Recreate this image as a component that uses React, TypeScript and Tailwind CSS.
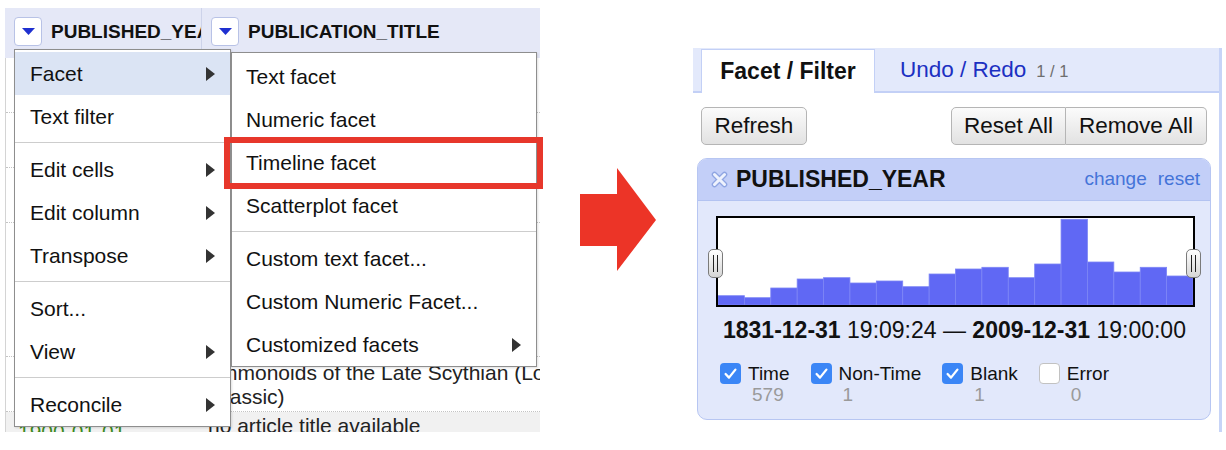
import React from "react";

const bars = [77.7, 79.7, 70, 61, 59.7, 65, 63, 68.7, 56, 51, 49.3, 59.7, 46, 1.3, 44, 54, 49.3, 58];

function RightTri() {
  return (
    <svg width="9" height="14" viewBox="0 0 9 14" className="block shrink-0">
      <path d="M0 0 L9 7 L0 14 Z" fill="#333" />
    </svg>
  );
}

function DropBtn() {
  return (
    <div className="w-[28px] h-[29px] shrink-0 rounded-[4px] border border-[#b8c2e6] bg-white flex items-center justify-center">
      <svg width="13" height="7" viewBox="0 0 13 7" className="block">
        <path d="M0 0 H13 L6.5 7 Z" fill="#1f30d0" />
      </svg>
    </div>
  );
}

function MenuItem({ label, arrow = false, active = false, sub = false }: { label: string; arrow?: boolean; active?: boolean; sub?: boolean }) {
  const cls = sub
    ? "h-[43px] flex items-center pl-[14px] pr-[15px]"
    : active
    ? "h-[43px] flex items-center pl-[15px] pr-[15px] bg-[#dbe4f4]"
    : "h-[43px] flex items-center pl-[15px] pr-[15px]";
  return (
    <div className={cls}>
      <span className="flex-1 whitespace-nowrap">{label}</span>
      {arrow ? <RightTri /> : null}
    </div>
  );
}

function Sep() {
  return (
    <div className="h-[10px] pt-[4px]">
      <div className="h-px bg-[#cdcdcd]" />
    </div>
  );
}

function LeftPart() {
  return (
    <div className="relative ml-[5px] mt-[8px] w-[535px] h-[424px] shrink-0">
      <div className="w-full h-full overflow-hidden flex flex-col">
        <div className="h-[50px] shrink-0 flex bg-[#e5e8f7]">
          <div className="w-[197px] shrink-0 overflow-hidden flex items-start pt-[9px] pl-[9px] gap-[9px] border-r border-[#cdd3ea]">
            <DropBtn />
            <span className="text-[19px] font-bold leading-[29px] whitespace-nowrap">PUBLISHED_YEAR</span>
          </div>
          <div className="flex-1 flex items-start pt-[9px] pl-[9px] gap-[9px]">
            <DropBtn />
            <span className="text-[19px] font-bold leading-[29px] whitespace-nowrap">PUBLICATION_TITLE</span>
          </div>
        </div>
        <div className="flex-1 flex flex-col border-l border-[#d4d4d4] text-[21px] leading-[24px] text-[#222]">
          <div className="h-[55px] shrink-0 border-b border-dotted border-[#c4c4c4]" />
          <div className="h-[55px] shrink-0 border-b border-dotted border-[#c4c4c4]" />
          <div className="h-[55px] shrink-0 border-b border-dotted border-[#c4c4c4]" />
          <div className="h-[134px] shrink-0 border-b border-dotted border-[#c4c4c4]" />
          <div className="h-[55px] shrink-0 flex border-b border-dotted border-[#c4c4c4]">
            <div className="w-[196px] shrink-0" />
            <div className="flex-1 overflow-hidden pl-[4px] pt-[4px] whitespace-nowrap">
              <div>Ammonoids of the Late Scythian (Lower</div>
              <div>Triassic)</div>
            </div>
          </div>
          <div className="flex-1 flex bg-[#f1f1f1]">
            <div className="w-[196px] shrink-0 pl-[12px] pt-[8px] text-[#3b8a1d] whitespace-nowrap">1900-01-01</div>
            <div className="flex-1 overflow-hidden pl-[6px] pt-[2px] whitespace-nowrap">no article title available</div>
          </div>
        </div>
      </div>

      <div className="absolute left-[9px] top-[41px] w-[217px] border border-[#8e8e8e] bg-white pt-[2px] text-[21px] leading-[24px] text-[#111] shadow-[1px_1px_2px_rgba(0,0,0,0.12)]">
        <MenuItem label="Facet" arrow active />
        <MenuItem label="Text filter" />
        <Sep />
        <MenuItem label="Edit cells" arrow />
        <MenuItem label="Edit column" arrow />
        <MenuItem label="Transpose" arrow />
        <Sep />
        <MenuItem label="Sort..." />
        <MenuItem label="View" arrow />
        <Sep />
        <MenuItem label="Reconcile" arrow />
      </div>

      <div className="absolute left-[226px] top-[44px] w-[306px] border border-[#8e8e8e] bg-white pt-[2px] text-[21px] leading-[24px] text-[#111] shadow-[1px_1px_2px_rgba(0,0,0,0.12)]">
        <MenuItem label="Text facet" sub />
        <MenuItem label="Numeric facet" sub />
        <MenuItem label="Timeline facet" sub />
        <MenuItem label="Scatterplot facet" sub />
        <Sep />
        <MenuItem label="Custom text facet..." sub />
        <MenuItem label="Custom Numeric Facet..." sub />
        <MenuItem label="Customized facets" arrow sub />
      </div>

      <div className="absolute left-[219px] top-[129px] w-[319px] h-[52px] border-[6px] border-[#e7372b]" />
    </div>
  );
}

function Arrow() {
  return (
    <svg width="76" height="103" viewBox="0 0 76 103" className="block shrink-0 ml-[40px] mt-[168px]">
      <path d="M0 26 H37 V0 L76 52 L37 103 V78 H0 Z" fill="#ec3427" />
    </svg>
  );
}

function Handle({ right = false }: { right?: boolean }) {
  return (
    <div
      className={
        right
          ? "absolute left-[470px] top-[33px] w-[15px] h-[29px] rounded-[5px] border border-[#7a7a7a] bg-linear-to-b from-white to-[#d6d6d6] flex justify-center gap-[2.5px] pt-[5px]"
          : "absolute left-[-8px] top-[33px] w-[15px] h-[29px] rounded-[5px] border border-[#7a7a7a] bg-linear-to-b from-white to-[#d6d6d6] flex justify-center gap-[2.5px] pt-[5px]"
      }
    >
      <div className="w-[1.5px] h-[17px] bg-[#222]" />
      <div className="w-[1.5px] h-[17px] bg-[#222]" />
    </div>
  );
}

function Check({ checked }: { checked: boolean }) {
  return checked ? (
    <div className="w-[21px] h-[21px] shrink-0 rounded-[4px] bg-[#3b86f6] flex items-center justify-center">
      <svg width="21" height="21" viewBox="0 0 21 21" className="block">
        <path d="M5.6 11 L9 14.6 L15.4 6.6" fill="none" stroke="white" strokeWidth="2.3" strokeLinecap="round" strokeLinejoin="round" />
      </svg>
    </div>
  ) : (
    <div className="w-[21px] h-[21px] shrink-0 rounded-[4px] bg-white border border-[#c2c2c2]" />
  );
}

function ChoiceItem({ label, count, checked }: { label: string; count: string; checked: boolean }) {
  return (
    <div className="flex items-start gap-[7px]">
      <Check checked={checked} />
      <div className="flex flex-col">
        <span className="text-[19px] leading-[21px] text-[#111] whitespace-nowrap">{label}</span>
        <span className="mt-[2px] ml-[4px] text-[19px] leading-[18px] text-[#9a9a9a]">{count}</span>
      </div>
    </div>
  );
}

function RightPanel() {
  const w = 475 / 18;
  return (
    <div className="ml-[37px] mt-[48px] w-[529px] h-[384px] shrink-0 flex">
      <div className="flex-1 flex flex-col bg-white">
        <div className="h-[45px] shrink-0 flex items-end pl-[8px] bg-[#e3e9fb] border-b-2 border-[#c3d0f6]">
          <div className="w-[174px] h-[44px] -mb-[2px] bg-white border border-b-0 border-[#c3d0f6] flex items-center justify-center text-[23px] font-bold text-[#111] whitespace-nowrap">
            Facet / Filter
          </div>
          <div className="self-center ml-[25px] flex items-baseline whitespace-nowrap">
            <span className="text-[22.5px] text-[#1c30c2]">Undo / Redo</span>
            <span className="ml-[10px] text-[16.5px] text-[#6e6e6e]">1 / 1</span>
          </div>
        </div>

        <div className="flex mt-[14px] pl-[8px] pr-[12px]">
          <div className="w-[106px] h-[38px] rounded-[5px] border border-[#b5b5b5] bg-linear-to-b from-[#fbfbfb] to-[#e2e2e2] flex items-center justify-center text-[22.5px] text-[#111]">
            Refresh
          </div>
          <div className="flex-1" />
          <div className="flex">
            <div className="w-[115px] h-[38px] rounded-l-[5px] border border-[#b5b5b5] bg-linear-to-b from-[#fbfbfb] to-[#e2e2e2] flex items-center justify-center text-[22.5px] text-[#111] whitespace-nowrap">
              Reset All
            </div>
            <div className="w-[141px] h-[38px] rounded-r-[5px] border border-l-0 border-[#b5b5b5] bg-linear-to-b from-[#fbfbfb] to-[#e2e2e2] flex items-center justify-center text-[22.5px] text-[#111] whitespace-nowrap">
              Remove All
            </div>
          </div>
        </div>

        <div className="ml-[4px] mr-[8px] mt-[13px] rounded-[10px] border border-[#b7c6f2] bg-[#e2e8fb] overflow-hidden">
          <div className="h-[42px] flex items-center pl-[13px] pr-[10px] bg-[#c3cff8] border-b border-[#b3c3f1]">
            <svg width="17" height="17" viewBox="0 0 17 17" className="block shrink-0">
              <path d="M3.5 3.5 L13.5 13.5 M13.5 3.5 L3.5 13.5" stroke="#8fa5e2" strokeWidth="5.6" strokeLinecap="round" />
              <path d="M3.5 3.5 L13.5 13.5 M13.5 3.5 L3.5 13.5" stroke="#eef2fd" strokeWidth="3" strokeLinecap="round" />
            </svg>
            <span className="ml-[8px] text-[23px] font-bold text-[#111] whitespace-nowrap">PUBLISHED_YEAR</span>
            <div className="flex-1" />
            <span className="text-[19px] text-[#4474d8]">change</span>
            <span className="ml-[11px] text-[19px] text-[#4474d8]">reset</span>
          </div>

          <div className="relative ml-[18px] mt-[15px] w-[479px] h-[91px]">
            <div className="w-full h-full border-2 border-black bg-white">
              <svg width="475" height="87" viewBox="0 0 475 87" className="block">
                {bars.map((y, i) => (
                  <rect key={i} x={i * w} y={y} width={w} height={87 - y} fill="#6068f4" stroke="#7d85f6" strokeWidth="0.8" />
                ))}
              </svg>
            </div>
            <Handle />
            <Handle right />
          </div>

          <div className="mt-[10px] pl-[25px] text-[23px] leading-[26px] text-[#111] whitespace-nowrap">
            <span className="font-bold">1831-12-31</span> 19:09:24 — <span className="font-bold">2009-12-31</span> 19:00:00
          </div>

          <div className="mt-[20px] pl-[22px] pb-[15px] flex gap-[21px]">
            <ChoiceItem label="Time" count="579" checked />
            <ChoiceItem label="Non-Time" count="1" checked />
            <ChoiceItem label="Blank" count="1" checked />
            <ChoiceItem label="Error" count="0" checked={false} />
          </div>
        </div>
      </div>
      <div className="w-[3px] shrink-0 bg-[#c7d4f7]" />
    </div>
  );
}

export default function App() {
  return (
    <div className="w-[1226px] h-[450px] bg-white flex items-start font-['Liberation_Sans',Arial,sans-serif] text-[#111]">
      <LeftPart />
      <Arrow />
      <RightPanel />
    </div>
  );
}
